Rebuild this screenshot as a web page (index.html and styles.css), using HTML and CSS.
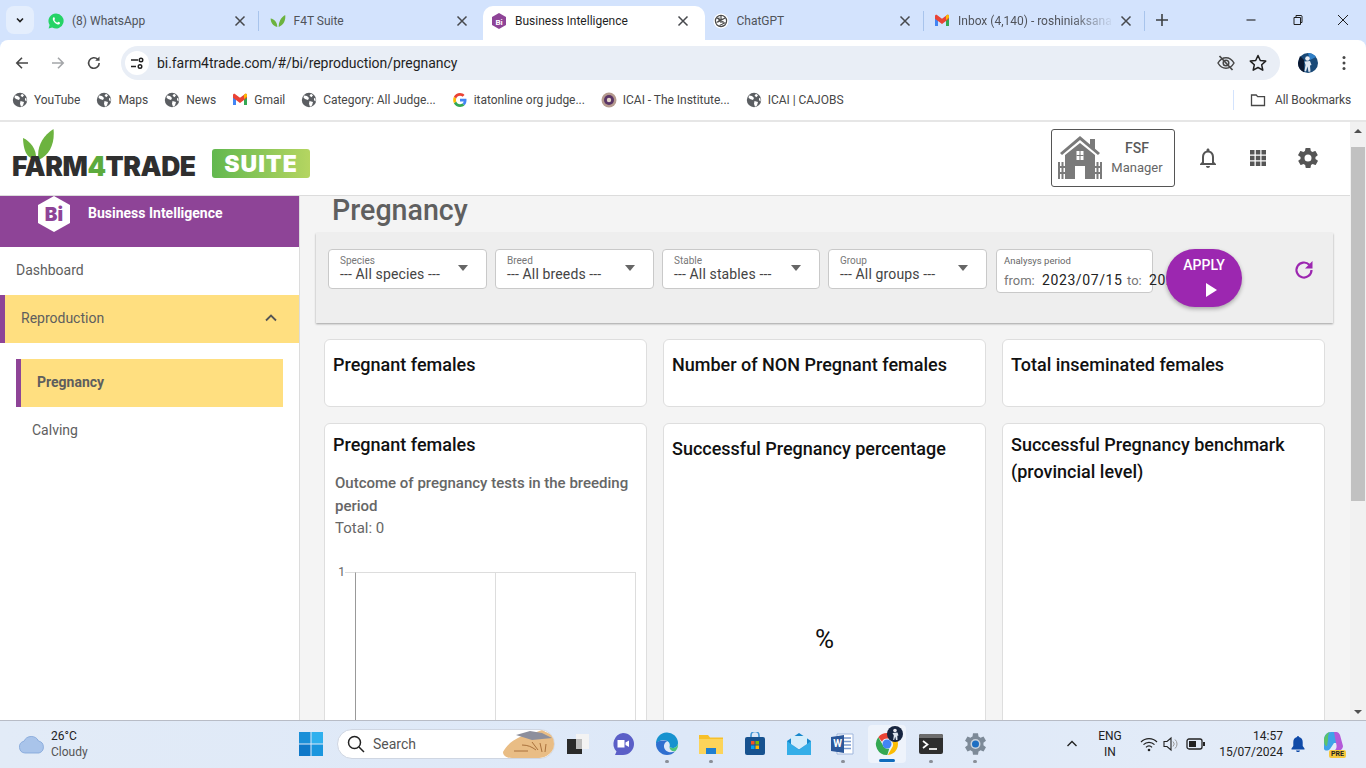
FILE: index.html
```html
<!DOCTYPE html>
<html lang="en">
<head>
<meta charset="utf-8">
<title>Business Intelligence</title>
<link rel="stylesheet" href="styles.css">
</head>
<body>
<svg class="defs" aria-hidden="true">
  <symbol id="x" viewBox="0 0 16 16"><path d="M3.5 3.5l9 9M12.5 3.5l-9 9" fill="none" stroke="#47494d" stroke-width="1.5"/></symbol>
  <symbol id="globe" viewBox="0 0 16 16"><circle cx="8" cy="8" r="7.2" fill="#5b5e62"/><path d="M3 3.5l3 .5 2 2-1 2-3-1-1.5-1.5zM10 1.8l2 1.5-1.5 2-2-1.5zM8.5 9l3.5 1-1 3.5-2 1.2-1-3zM13 6l1.5.5.2 3-1.7-1.2z" fill="#fff"/></symbol>
  <symbol id="gmail" viewBox="0 0 16 16"><path d="M1 4v9h3V7z" fill="#4285f4"/><path d="M12 7v6h3V4z" fill="#34a853"/><path d="M1 3.2v2.6L8 11l7-5.2V3.2c0-1.2-1.4-1.8-2.3-1L8 5.7 3.3 2.2C2.4 1.4 1 2 1 3.2z" fill="#ea4335"/><path d="M12 7l3-2.4V3.2c0-1.2-1.4-1.8-2.3-1L12 2.8z" fill="#fbbc04"/></symbol>
</svg>

<div class="chrome">
  <div class="tabstrip">
    <div class="collapse"><svg viewBox="0 0 10 10" class="i10"><path d="M2 3.5l3 3 3-3" fill="none" stroke="#1f1f1f" stroke-width="1.6"/></svg></div>
    <div class="tab sep">
      <svg class="fav" viewBox="0 0 16 16"><path d="M8 .5a7.5 7.5 0 0 0-6.4 11.4L.6 15.4l3.6-1A7.5 7.5 0 1 0 8 .5z" fill="#25d366"/><path d="M5.5 4.3c-.9.8-1 2.2 0 3.8 1 1.7 2.500 2.900 4.300 3.400 1 .2 1.900-.4 2.200-1.200l-.1-.8-1.700-.8-.9 1c-1.200-.4-2.400-1.500-3-2.700l.7-.9-.7-1.800z" fill="#fff"/></svg>
      <span class="tab-title">(8) WhatsApp</span><svg class="close"><use href="#x"/></svg><i class="bar"></i>
    </div>
    <div class="tab">
      <svg class="fav" viewBox="0 0 16 16"><path d="M7.300 14C3 13 .8 9.500.6 5.500 4.500 6 7.300 9.500 7.300 14zM8.700 14c0-5 2-9.500 6.500-12 .7 5-1.500 10-6.500 12z" fill="#6cb33f"/></svg>
      <span class="tab-title">F4T Suite</span><svg class="close"><use href="#x"/></svg><i class="bar off"></i>
    </div>
    <div class="tab active">
      <svg class="fav" viewBox="0 0 16 16"><path d="M8 0l7 4v8l-7 4-7-4V4z" fill="#8e4497"/><text x="8" y="11.500" text-anchor="middle" class="fav-bi">Bi</text></svg>
      <span class="tab-title">Business Intelligence</span><svg class="close"><use href="#x"/></svg><i class="bar off"></i>
    </div>
    <div class="tab sep">
      <svg class="fav" viewBox="0 0 16 16"><circle cx="8" cy="8" r="7.500" fill="#fff"/><g fill="none" stroke="#4a4a4a" stroke-width="1.200"><circle cx="8" cy="8" r="5.600"/><path d="M4 5l6 3.500v4M12 5l-6 3.500v-4M8 3l0 7M3.500 9.500l6-3.500M12.500 9.500l-6 3"/></g></svg>
      <span class="tab-title">ChatGPT</span><svg class="close"><use href="#x"/></svg><i class="bar"></i>
    </div>
    <div class="tab sep">
      <svg class="fav"><use href="#gmail"/></svg>
      <span class="tab-title fade">Inbox (4,140) - roshiniaksana</span><svg class="close"><use href="#x"/></svg><i class="bar"></i>
    </div>
    <div class="newtab"><svg viewBox="0 0 14 14" class="i14"><path d="M7 1v12M1 7h12" fill="none" stroke="#3c4043" stroke-width="1.600"/></svg></div>
    <div class="winctl">
      <div class="wbtn"><svg viewBox="0 0 12 12" class="i12"><path d="M1.500 6h9" stroke="#1f1f1f" stroke-width="1.100"/></svg></div>
      <div class="wbtn"><svg viewBox="0 0 12 12" class="i12"><path d="M3 3.500h6.500v7H3zM5 3.500V1.500h5.500l.5.500v6.500h-1.500" fill="none" stroke="#1f1f1f" stroke-width="1"/></svg></div>
      <div class="wbtn"><svg viewBox="0 0 12 12" class="i12"><path d="M1 1l10 10M11 1L1 11" stroke="#1f1f1f" stroke-width="1"/></svg></div>
    </div>
  </div>

  <div class="toolbar">
    <div class="navbtn"><svg viewBox="0 0 16 16" class="i16"><path d="M14 8H3M8 2.800L2.800 8 8 13.200" fill="none" stroke="#474747" stroke-width="1.600"/></svg></div>
    <div class="navbtn"><svg viewBox="0 0 16 16" class="i16"><path d="M2 8h11M8 2.800L13.200 8 8 13.200" fill="none" stroke="#a4a6a9" stroke-width="1.600"/></svg></div>
    <div class="navbtn"><svg viewBox="0 0 16 16" class="i16"><path d="M13.200 8a5.300 5.300 0 1 1-1.500-3.700" fill="none" stroke="#474747" stroke-width="1.600"/><path d="M13.500 1.500v4.300H9.200z" fill="#474747"/></svg></div>
    <div class="omnibox">
      <div class="site"><svg viewBox="0 0 16 16" class="i16"><g fill="none" stroke="#1f1f1f" stroke-width="1.400"><path d="M2 5h7M2 11.500h5"/><circle cx="12" cy="5" r="1.800"/><circle cx="11" cy="11.500" r="1.800"/></g></svg></div>
      <span class="url">bi.farm4trade.com/#/bi/reproduction/pregnancy</span>
      <div class="omni-icons">
        <svg viewBox="0 0 20 20" class="i20"><path d="M2 10c2-3.500 4.800-5.300 8-5.300S16 6.500 18 10c-2 3.500-4.800 5.300-8 5.300S4 13.500 2 10z" fill="none" stroke="#474747" stroke-width="1.500"/><circle cx="10" cy="10" r="2.800" fill="none" stroke="#474747" stroke-width="1.500"/><path d="M3.500 3l13 14" stroke="#474747" stroke-width="1.700"/></svg>
        <svg viewBox="0 0 20 20" class="i20"><path d="M10 2.500l2.300 5 5.400.6-4 3.700 1.100 5.400L10 14.500l-4.800 2.700 1.100-5.400-4-3.700 5.400-.6z" fill="none" stroke="#1f1f1f" stroke-width="1.500" stroke-linejoin="round"/></svg>
      </div>
    </div>
    <div class="avatar-btn"><svg viewBox="0 0 20 20" class="i20"><circle cx="10" cy="10" r="10" fill="#1a4a78"/><path d="M0 10a10 10 0 0 0 6 9.200V7L2 3z" fill="#0a1730"/><path d="M10 0a10 10 0 0 1 8 4l-6 3z" fill="#2f7fc7"/><circle cx="9.500" cy="5.500" r="2.300" fill="#eceef4"/><path d="M6.500 8.500L12 8l1.500 4-1.500.5.500 6-2 .5-1-5.500-1.500 5-1.500-.5 1-6z" fill="#dfe6f0"/></svg></div>
    <div class="menu-btn"><svg viewBox="0 0 4 16" class="dots"><circle cx="2" cy="2.500" r="1.500" fill="#474747"/><circle cx="2" cy="8" r="1.500" fill="#474747"/><circle cx="2" cy="13.500" r="1.500" fill="#474747"/></svg></div>
  </div>

  <div class="bookmarks">
    <span class="bm"><svg class="i16"><use href="#globe"/></svg>YouTube</span>
    <span class="bm"><svg class="i16"><use href="#globe"/></svg>Maps</span>
    <span class="bm"><svg class="i16"><use href="#globe"/></svg>News</span>
    <span class="bm"><svg class="i16"><use href="#gmail"/></svg>Gmail</span>
    <span class="bm"><svg class="i16"><use href="#globe"/></svg>Category: All Judge...</span>
    <span class="bm"><svg viewBox="0 0 16 16" class="i16"><path d="M14.500 8.200c0-.5 0-1-.1-1.400H8v2.700h3.700c-.2.900-.7 1.600-1.400 2.100l2.200 1.700c1.300-1.200 2-3 2-5.100z" fill="#4285f4"/><path d="M8 15c1.800 0 3.400-.6 4.500-1.700l-2.200-1.700c-.6.400-1.400.7-2.300.7-1.800 0-3.300-1.200-3.800-2.800L1.900 11.200C3 13.500 5.300 15 8 15z" fill="#34a853"/><path d="M4.200 9.500c-.3-.9-.3-1.900 0-2.900L1.900 4.800c-1 1.900-1 4.400 0 6.400z" fill="#fbbc04"/><path d="M8 3.800c1 0 1.900.3 2.600 1l1.900-1.900C11.400 1.700 9.800 1 8 1 5.300 1 3 2.500 1.900 4.800l2.300 1.800C4.700 5 6.200 3.800 8 3.800z" fill="#ea4335"/></svg>itatonline org judge...</span>
    <span class="bm"><svg viewBox="0 0 16 16" class="i16"><circle cx="8" cy="8" r="7.500" fill="#b59a8e"/><circle cx="8" cy="8" r="5" fill="#5a3566"/><circle cx="8" cy="8" r="2.200" fill="#e4d6c8"/></svg>ICAI - The Institute...</span>
    <span class="bm"><svg class="i16"><use href="#globe"/></svg>ICAI | CAJOBS</span>
    <i class="bm-sep"></i>
    <span class="bm-all"><svg viewBox="0 0 16 16" class="i16"><path d="M1.500 3h4.700l1.500 1.700h6.800v8.800h-13z" fill="none" stroke="#474747" stroke-width="1.300"/></svg>All Bookmarks</span>
  </div>
</div>

<div class="app">
  <div class="app-main">
    <header class="app-header">
      <div class="logo">
        <div class="logo-mark">
          <svg viewBox="0 0 31 32" class="leaves"><path d="M13 31C5.500 29.500.5 24.500 0 9c7 3 14 11 13 22z" fill="#6cb33f"/><path d="M15.500 31C13.500 19 19 7 30.500 0c1.500 13-3 26-15 31z" fill="#6cb33f"/></svg>
          <div class="wordmark">FARM<span class="four">4</span>TRADE</div>
        </div>
        <div class="suite">SUITE</div>
      </div>
      <div class="userbox">
        <svg viewBox="0 0 44 43" class="house"><g fill="#7a7a7a"><path d="M32 3h5v11l-5-4z"/><path d="M22 0L2 17l2 2L22 4l18 15 2-2z"/><path d="M7 19L22 7l15 12v24H27V30h-10v13H7z"/><path d="M0 26h2v17H0zM3.500 26h2v17h-2zM38.500 26h2v17h-2zM42 26h2v17h-2z"/><path d="M0 30h7v2H0zM0 36h7v2H0zM37 30h7v2h-7zM37 36h7v2h-7z"/></g><path d="M18.500 15h7v9h-7z" fill="#fff"/><path d="M21.500 15h1v9h-1zM18.500 19h7v1h-7z" fill="#7a7a7a"/></svg>
        <div class="user-text"><div class="farm">FSF</div><div class="role">Manager</div></div>
      </div>
      <div class="head-icons">
        <svg viewBox="0 0 24 24" class="i24"><path d="M12 22c1.100 0 2-.9 2-2h-4c0 1.100.9 2 2 2zm6-6v-5c0-3.100-1.600-5.600-4.500-6.300V4c0-.8-.7-1.500-1.500-1.500s-1.500.7-1.500 1.500v.7C7.600 5.400 6 7.900 6 11v5l-2 2v1h16v-1zm-2 1H8v-6c0-2.500 1.500-4.500 4-4.500s4 2 4 4.500z" fill="#555"/></svg>
        <svg viewBox="0 0 24 24" class="i24"><path d="M4 4h4.500v4.500H4zM9.800 4h4.500v4.500H9.800zM15.500 4H20v4.500h-4.500zM4 9.800h4.500v4.500H4zM9.800 9.800h4.500v4.500H9.800zM15.500 9.800H20v4.500h-4.500zM4 15.500h4.500V20H4zM9.800 15.500h4.500V20H9.800zM15.500 15.500H20V20h-4.500z" fill="#555"/></svg>
        <svg viewBox="0 0 24 24" class="i24"><path d="M19.400 13c0-.3.100-.6.100-1s0-.7-.1-1l2.100-1.600c.2-.1.200-.4.100-.6l-2-3.500c-.1-.2-.4-.3-.6-.2l-2.500 1c-.5-.4-1.100-.7-1.700-1l-.4-2.600c0-.3-.2-.4-.5-.4h-4c-.3 0-.5.2-.5.400l-.4 2.600c-.6.300-1.200.6-1.700 1l-2.500-1c-.2-.1-.5 0-.6.200l-2 3.500c-.1.200-.1.500.1.600L4.600 11c0 .3-.1.700-.1 1s0 .7.1 1l-2.100 1.600c-.2.100-.2.400-.1.600l2 3.500c.1.200.4.300.6.200l2.500-1c.5.400 1.100.7 1.700 1l.4 2.600c0 .3.200.4.500.4h4c.3 0 .5-.2.500-.4l.4-2.600c.6-.3 1.200-.6 1.700-1l2.500 1c.2.100.5 0 .6-.2l2-3.500c.1-.2.100-.5-.1-.6zM12 15.500a3.500 3.500 0 1 1 0-7 3.500 3.500 0 0 1 0 7z" fill="#555"/></svg>
      </div>
    </header>

    <div class="app-body">
      <aside class="sidebar">
        <div class="side-head">
          <svg viewBox="0 0 32 36" class="hex"><path d="M16 0l16 9v18l-16 9-16-9V9z" fill="#fff"/><text x="16" y="25" text-anchor="middle" class="hex-bi">Bi</text></svg>
          <span>Business Intelligence</span>
        </div>
        <div class="side-item">Dashboard</div>
        <div class="side-group">Reproduction<svg viewBox="0 0 14 14" class="i14"><path d="M2 9.500L7 4.500l5 5" fill="none" stroke="#555" stroke-width="1.800"/></svg></div>
        <div class="side-current">Pregnancy</div>
        <div class="side-sub">Calving</div>
      </aside>

      <main class="content">
        <h1 class="page-title">Pregnancy</h1>
        <section class="filters">
          <div class="select"><div class="sel-text"><div class="sel-label">Species</div><div class="sel-value">--- All species ---</div></div><i class="caret"></i></div>
          <div class="select"><div class="sel-text"><div class="sel-label">Breed</div><div class="sel-value">--- All breeds ---</div></div><i class="caret"></i></div>
          <div class="select"><div class="sel-text"><div class="sel-label">Stable</div><div class="sel-value">--- All stables ---</div></div><i class="caret"></i></div>
          <div class="select"><div class="sel-text"><div class="sel-label">Group</div><div class="sel-value">--- All groups ---</div></div><i class="caret"></i></div>
          <div class="datebox">
            <div class="date-label">Analysys period</div>
            <div class="date-row"><span class="d-from">from:</span><span class="d-val">2023/07/15</span><span class="d-to">to:</span><span class="d-val">2024/07/15</span></div>
          </div>
          <button class="apply">APPLY<svg viewBox="0 0 12 14" class="play"><path d="M1 0l11 7-11 7z" fill="#fff"/></svg></button>
          <svg viewBox="0 0 24 24" class="refresh"><path d="M19.500 12a7.500 7.500 0 1 1-2.200-5.300" fill="none" stroke="#9c27b0" stroke-width="2.200"/><path d="M20.500 3v7.500H13z" fill="#9c27b0"/></svg>
        </section>

        <section class="cards">
          <article class="card card-short"><h2 class="card-title">Pregnant females</h2></article>
          <article class="card card-short"><h2 class="card-title">Number of NON Pregnant females</h2></article>
          <article class="card card-short"><h2 class="card-title">Total inseminated females</h2></article>

          <article class="card card-tall tight">
            <h2 class="card-title">Pregnant females</h2>
            <p class="chart-sub">Outcome of pregnancy tests in the breeding period</p>
            <p class="chart-total">Total: 0</p>
            <div class="chart">
              <span class="tick-label">1</span><i class="tick"></i>
              <div class="plot"><i class="cell"></i><i class="cell"></i></div>
            </div>
          </article>
          <article class="card card-tall pct-card">
            <h2 class="card-title">Successful Pregnancy percentage</h2>
            <div class="pct">%</div>
          </article>
          <article class="card card-tall tight">
            <h2 class="card-title">Successful Pregnancy benchmark (provincial level)</h2>
          </article>
        </section>
      </main>
    </div>
  </div>
  <div class="scrollbar">
    <div class="sb-btn"><i class="sb-up"></i></div>
    <div class="sb-track"><div class="sb-thumb"></div></div>
    <div class="sb-btn"><i class="sb-down"></i></div>
  </div>
</div>

<footer class="taskbar">
  <div class="weather">
    <svg viewBox="0 0 28 20" class="cloud"><path d="M7 19a6 6 0 0 1-1-11.800A8 8 0 0 1 20.500 7 6.200 6.200 0 0 1 21 19z" fill="#a9c4ea" stroke="#7fa3d8" stroke-width=".8"/></svg>
    <div class="w-text"><div class="w-temp">26°C</div><div class="w-desc">Cloudy</div></div>
  </div>
  <svg viewBox="0 0 24 24" class="winlogo"><path d="M0 0h11.500v11.500H0z" fill="#1a8fd8"/><path d="M12.500 0H24v11.500H12.500z" fill="#2fb0ee"/><path d="M0 12.500h11.500V24H0z" fill="#0f78c8"/><path d="M12.500 12.500H24V24H12.500z" fill="#1a96de"/></svg>
  <div class="search">
    <svg viewBox="0 0 18 18" class="i18"><circle cx="7.500" cy="7.500" r="6" fill="none" stroke="#222" stroke-width="1.500"/><path d="M12 12l5 5" stroke="#222" stroke-width="1.500"/></svg>
    <span>Search</span>
    <svg viewBox="0 0 52 28" class="hand"><path d="M1 22C6 12 18 5 32 3l8-3 12 6v12c-3 6-9 10-15 10H10C5 28 1 26 1 22z" fill="#e9bd85"/><path d="M14 5l14-4 12 2 10 5-20 2z" fill="#8d8f9c"/><path d="M20 15c6 0 10 2 14 5M30 12l6 8M38 13l2 9M44 14l-1 8M12 21h14" fill="none" stroke="#a9713c" stroke-width="1"/></svg>
  </div>
  <div class="tb-icon"><svg viewBox="-3 0 24 24" class="i24"><path d="M8 2h13v15H8z" fill="#f3f3f3"/><path d="M-1 7h15v15H-1z" fill="#2a2a2a"/><path d="M8 7h6v10H8z" fill="#bdbdbd"/></svg></div>
  <div class="tb-icon tb-gap"><svg viewBox="0 0 24 24" class="i24"><path d="M12 1a11 11 0 0 1 0 22H4l1.500-3.500A11 11 0 0 1 12 1z" fill="#5b5fc7"/><path d="M6.500 8h7v7.500h-7zM14.500 10.500l3.500-2v6.500l-3.500-2z" fill="#fff"/></svg><i class="run none"></i></div>
  <div class="tb-icon"><svg viewBox="0 0 24 24" class="i24"><path d="M1 12A11 11 0 0 1 23 11c0 3-2.500 5-5.500 5-2 0-3-1-3-1 .5-1 .5-3-.5-4.500C12 7.500 7 7 3.500 9.500 2.500 10.300 1.500 11 1 12z" fill="#1792cf"/><path d="M1 12c0 6 5 11 11 11 3 0 6-1 8-3.500-5 2-10 0-11-4.500-.5-2.500 1-5 3.500-6C8 8 2 8.500 1 12z" fill="#2f6fd0"/><path d="M23 11c0 3-2.500 5-5.500 5-2 0-3-1-3-1 0 3 3 5 6 4 2-2 3-5 2.500-8z" fill="#4dc47a"/></svg><i class="run"></i></div>
  <div class="tb-icon"><svg viewBox="0 0 24 24" class="i24"><path d="M0 3h9l2 2.500h13V12H0z" fill="#f7c02a"/><path d="M0 7h24v15H0z" fill="#fcd45a"/><path d="M7 16h10v6H7z" fill="#1f7fd0"/></svg><i class="run"></i></div>
  <div class="tb-icon"><svg viewBox="0 0 24 24" class="i24"><path d="M8 6V3.500a4 4 0 0 1 8 0V6" fill="none" stroke="#3f94d4" stroke-width="1.600"/><rect x="2" y="5" width="20" height="18" rx="2" fill="#17528f"/><path d="M8 9h3.500v3.500H8z" fill="#f25022"/><path d="M12.500 9H16v3.500h-3.500z" fill="#7fba00"/><path d="M8 13.500h3.500V17H8z" fill="#00a4ef"/><path d="M12.500 13.500H16V17h-3.500z" fill="#ffb900"/></svg></div>
  <div class="tb-icon"><svg viewBox="0 0 24 24" class="i24"><path d="M0 9l12-8 12 8v14H0z" fill="#1587cc"/><path d="M0 9l12 9 12-9v14H0z" fill="#34aee8"/><path d="M4 4h16v8l-8 5.500L4 12z" fill="#d5edfb"/></svg></div>
  <div class="tb-icon"><svg viewBox="0 0 24 24" class="i24"><path d="M6 2h16v20H6z" fill="#fff" stroke="#9fb6dc"/><path d="M13 6h7M13 9.500h7M13 13h7M13 16.500h7" stroke="#7b9ad0" stroke-width="1.400"/><path d="M0 5l13-2v18L0 19z" fill="#2b579a"/><text x="6.500" y="15" text-anchor="middle" class="word-w">W</text></svg><i class="run"></i></div>
  <div class="tb-icon tb-active">
    <svg viewBox="0 0 24 24" class="i24"><path d="M12 1a11 11 0 0 1 9.500 5.500H12a5.500 5.500 0 0 0-5 3.200L3.300 5.200A11 11 0 0 1 12 1z" fill="#ea4335"/><path d="M21.500 6.500A11 11 0 0 1 12.800 23l4-7a5.500 5.500 0 0 0 .5-6z" fill="#fbbc04"/><path d="M3.300 5.200l4.500 7.800a5.500 5.500 0 0 0 6.500 3.500l-2 6.500A11 11 0 0 1 3.300 5.200z" fill="#34a853"/><circle cx="12" cy="12" r="4.500" fill="#4285f4"/></svg>
    <svg viewBox="0 0 16 16" class="badge"><circle cx="8" cy="8" r="8" fill="#16243f"/><circle cx="8" cy="4.500" r="1.800" fill="#e8e8ee"/><path d="M5.500 7l5-.5 1 3-1.200.3.200 4.200h-1.500l-.8-3.500-1 3.500H6.200l.6-4.500z" fill="#dfe6f0"/></svg>
    <i class="run long"></i>
  </div>
  <div class="tb-icon"><svg viewBox="0 0 24 24" class="i24"><rect y="2" width="24" height="20" rx="2" fill="#2e2e2e"/><path d="M0 6V4a2 2 0 0 1 2-2h20a2 2 0 0 1 2 2v2z" fill="#6d6d6d"/><path d="M4 9l4.500 3.500L4 16" fill="none" stroke="#fff" stroke-width="1.700"/><path d="M10 17h8" stroke="#fff" stroke-width="1.700"/></svg><i class="run"></i></div>
  <div class="tb-icon"><svg viewBox="0 0 24 24" class="i24"><path d="M20.400 13.200l.1-1.200-.1-1.200 2.600-2-2.500-4.300-3 1.200a9 9 0 0 0-2-1.200L15 1.300h-5l-.5 3.200a9 9 0 0 0-2 1.200l-3-1.200L2 8.800l2.600 2L4.500 12l.1 1.200-2.600 2 2.500 4.300 3-1.200a9 9 0 0 0 2 1.200l.5 3.200h5l.5-3.200a9 9 0 0 0 2-1.200l3 1.200 2.500-4.300z" fill="#7d8a98"/><circle cx="12.500" cy="12" r="5" fill="#c9d2dc"/><circle cx="12.500" cy="12" r="3.500" fill="#1f6fc2"/></svg><i class="run"></i></div>

  <div class="tray">
    <svg viewBox="0 0 12 12" class="i12 chev"><path d="M1.500 8L6 3.500 10.500 8" fill="none" stroke="#222" stroke-width="1.400"/></svg>
    <div class="lang"><div>ENG</div><div>IN</div></div>
    <svg viewBox="0 0 18 16" class="tray-ico"><path d="M1 6a11 11 0 0 1 16 0M3.500 8.700a7.500 7.500 0 0 1 11 0M6 11.300a4 4 0 0 1 6 0" fill="none" stroke="#222" stroke-width="1.200"/><circle cx="9" cy="14" r="1.300" fill="#222"/></svg>
    <svg viewBox="0 0 18 16" class="tray-ico"><path d="M2 5.500h3l4-3.500v12l-4-3.500H2z" fill="none" stroke="#222" stroke-width="1.100"/><path d="M11 5.500a3.500 3.500 0 0 1 0 5M13 3.500a6 6 0 0 1 0 9" fill="none" stroke="#999" stroke-width="1"/></svg>
    <svg viewBox="0 0 20 14" class="batt"><rect x="1" y="2" width="15" height="10" rx="2" fill="none" stroke="#222" stroke-width="1.300"/><rect x="3" y="4" width="7" height="6" fill="#222"/><path d="M17 5h2v4h-2z" fill="#222"/></svg>
    <div class="clock"><div>14:57</div><div>15/07/2024</div></div>
    <svg viewBox="0 0 16 16" class="i16 tray-bell"><path d="M8 16c1 0 1.800-.7 2-1.600H6c.2.900 1 1.600 2 1.600zM8 0a1 1 0 0 0-1 1C4.500 1.600 3.300 3.700 3.300 6v4L1.500 12.500v1h13v-1L12.700 10V6c0-2.300-1.200-4.400-3.700-5a1 1 0 0 0-1-1z" fill="#0f4aa8"/></svg>
    <div class="copilot">
      <svg viewBox="0 0 24 24" class="i24"><path d="M3 10c0-5 3-8 7-8h4c2 0 3 1 4 3l3 10c-1-1-3-2-5-2h-3L9 19c-2 2-5 2-6 0z" fill="#3fa3e8"/><path d="M13 2h2c2 0 3 1 4 3l3 11c0 3-3 5-6 5h-3c3-2 3-5 2-8z" fill="#b45ad9"/><path d="M3 10c0-3 2-7 6-8-2 2-2 5-2 8l-1 6c-2 0-3-2-3-6z" fill="#5dc36a"/></svg>
      <span class="pre">PRE</span>
    </div>
  </div>
</footer>
</body>
</html>
```

FILE: styles.css
```css
* { box-sizing: border-box; }
html, body { margin: 0; padding: 0; }
body {
  width: 1366px;
  height: 768px;
  overflow: hidden;
  display: flex;
  flex-direction: column;
  font-family: Roboto, "Liberation Sans", sans-serif;
  background: #fff;
}
svg { display: block; flex: none; }
.defs { width: 0; height: 0; overflow: hidden; }
.i10 { width: 10px; height: 10px; }
.i12 { width: 12px; height: 12px; }
.i14 { width: 14px; height: 14px; }
.i16 { width: 16px; height: 16px; }
.i18 { width: 18px; height: 18px; }
.i20 { width: 20px; height: 20px; }
.i24 { width: 24px; height: 24px; }

/* browser chrome */
.chrome { background: #d3e3fd; flex: none; }
.tabstrip { height: 40px; display: flex; align-items: flex-start; padding-left: 6px; color: #3c4043; }
.collapse {
  width: 28px; height: 28px; margin: 6px 6px 0 0; border-radius: 8px;
  background: #e4eefd; display: flex; align-items: center; justify-content: center;
}
.tab {
  width: 221.5px; height: 34px; margin-top: 6px; padding: 0 0 5px 8px;
  display: flex; align-items: center; font-size: 12px; position: relative;
}
.fav { width: 16px; height: 16px; margin-right: 8px; }
.fav-bi { font: 700 8px Roboto, sans-serif; fill: #fff; }
.tab-title { flex: 1; white-space: nowrap; overflow: hidden; min-width: 0; color: #50535a; }
.fade { -webkit-mask-image: linear-gradient(90deg, #000 70%, transparent 98%); mask-image: linear-gradient(90deg, #000 70%, transparent 98%); }
.close { width: 16px; height: 16px; }
.bar { width: 1px; height: 20px; background: #a8c4ec; margin-left: 10px; margin-right: 2.5px; flex: none; }
.bar.off { background: transparent; }
.tab.active { background: #fff; border-radius: 10px 10px 0 0; width: 221.5px; }
.tab.active .tab-title { color: #1f1f1f; }
.newtab { width: 20px; height: 20px; margin: 10px 0 0 4px; display: flex; align-items: center; justify-content: center; }
.winctl { margin-left: auto; display: flex; }
.wbtn { width: 46px; height: 40px; display: flex; align-items: center; justify-content: center; }

.toolbar {
  height: 40px; background: #fff; border-radius: 8px 8px 0 0;
  display: flex; align-items: flex-end; padding-left: 4px;
}
.navbtn { width: 36px; height: 34px; display: flex; align-items: center; justify-content: center; }
.omnibox {
  width: 1159px; height: 34px; margin-left: 9px; background: #e9eef6; border-radius: 17px;
  display: flex; align-items: center; padding: 0 12px 0 4px;
}
.site { width: 24px; height: 24px; border-radius: 50%; background: #fff; display: flex; align-items: center; justify-content: center; margin-right: 8px; }
.url { font-size: 14px; color: #1f1f1f; letter-spacing: -.05px; }
.omni-icons { margin-left: auto; display: flex; gap: 12px; }
.avatar-btn { width: 36px; height: 34px; margin-left: 10px; display: flex; align-items: center; justify-content: center; }
.menu-btn { width: 36px; height: 34px; display: flex; align-items: center; justify-content: center; }
.dots { width: 4px; height: 16px; }

.bookmarks {
  height: 40px; background: #fff; display: flex; align-items: center; padding: 0 15px 0 12px; gap: 16px;
  font-size: 12px; color: #474747; letter-spacing: -.03px;
}
.bm, .bm-all { display: flex; align-items: center; gap: 6px; white-space: nowrap; }
.bm-sep { width: 1px; height: 20px; background: #d3e3fd; margin-left: auto; }
.bm-all { gap: 9px; margin-left: 0; letter-spacing: -.1px; }

/* app frame */
.app { flex: none; height: 600px; display: flex; border-top: 2px solid #e6e6e6; overflow: hidden; }
.app-main { width: 1350px; display: flex; flex-direction: column; height: 598px; }
.app-header {
  height: 74px; flex: none; background: #fff; border-bottom: 1px solid #dcdcdc;
  display: flex; align-items: center; padding: 0 30px 2px 12px;
}
.logo { display: flex; align-items: flex-end; align-self: flex-start; margin-top: 7px; }
.logo-mark { display: flex; flex-direction: column; width: 186px; height: 49px; }
.leaves { width: 31px; height: 32px; margin-left: 11px; margin-bottom: -7px; }
.wordmark { font: 900 26.5px/24px Inter, "Liberation Sans", sans-serif; color: #2f2f2f; letter-spacing: -.45px; white-space: nowrap; }
.four { color: #5cab3d; }
.suite {
  width: 98px; height: 29px; margin-left: 14px; padding-top: 1px; border-radius: 3px;
  background: linear-gradient(90deg, #62b84f, #b5d561);
  color: #fff; font: 900 23px/28px Inter, sans-serif; text-align: center; letter-spacing: 1px;
}
.userbox {
  margin-left: auto; width: 124px; height: 58px; border: 1px solid #555; border-radius: 3px;
  display: flex; align-items: center; padding-left: 6px; margin-right: 21px;
}
.house { width: 44px; height: 43px; }
.user-text { flex: 1; text-align: center; color: #666; padding-right: 2px; }
.farm { font-size: 14px; font-weight: 500; line-height: 20px; color: #5a5a5a; }
.role { font-size: 13px; line-height: 20px; letter-spacing: 0; }
.head-icons { display: flex; gap: 26px; }

.app-body { flex: 1; display: flex; min-height: 0; }
.sidebar { width: 300px; flex: none; background: #fff; border-right: 1px solid #dcdcdc; font-size: 14px; color: #5e5e5e; }
.side-head {
  height: 51px; background: #8e4497; display: flex; align-items: flex-start; color: #fff;
  padding-left: 38px; font-weight: 700;
}
.side-head span { margin: 9px 0 0 18px; line-height: 16px; }
.hex { width: 32px; height: 36px; }
.hex-bi { font: 900 19px Inter, sans-serif; fill: #8e4497; }
.side-item { height: 48px; padding: 0 0 2px 16px; display: flex; align-items: center; }
.side-group {
  height: 48px; background: #ffdf80; border-left: 5px solid #8e4497; padding: 0 21px 2px 16px;
  display: flex; align-items: center; justify-content: space-between;
}
.side-current {
  margin: 16px 16px 0; height: 48px; background: #ffdf80; border-left: 5px solid #8e4497;
  padding: 0 0 2px 16px; display: flex; align-items: center; font-weight: 700; width: 267px;
}
.side-sub { height: 46px; padding-left: 32px; display: flex; align-items: center; }

.content { flex: 1; background: #f4f4f4; min-width: 0; }
.page-title { margin: 0; height: 37px; padding-left: 32px; font-size: 28.6px; font-weight: 500; line-height: 28px; color: #5f5f5f; }
.filters {
  margin-left: 16px; width: 1017px; height: 90px; background: #eeeeee; padding: 16px 0 0 12px;
  box-shadow: 0 1px 2px rgba(0,0,0,.35);
  display: flex; align-items: flex-start; gap: 8px;
}
.select {
  width: 159px; height: 40px; background: #fff; border: 1px solid #c9c9c9; border-radius: 4px;
  padding: 5px 18px 0 11px; display: flex; justify-content: space-between;
}
.select:nth-child(3) { width: 158px; }
.sel-label { font-size: 10px; line-height: 11px; color: #777; }
.sel-value { font-size: 14px; line-height: 16px; color: #444; white-space: nowrap; letter-spacing: .13px; }
.caret { width: 0; height: 0; margin-top: 10px; border: 5.5px solid transparent; border-top: 6px solid #666; border-bottom: 0; }
.datebox {
  width: 157px; height: 44px; margin-left: 1px; background: #fff; border: 1px solid #c9c9c9; border-radius: 4px;
  padding: 5px 0 0 7px; white-space: nowrap;
}
.date-label { font-size: 9.5px; line-height: 12px; color: #666; }
.date-row { display: flex; align-items: center; height: 20px; margin-top: 3px; }
.d-from { width: 38px; font-size: 13px; color: #777; flex: none; }
.d-to { width: 22px; font-size: 13px; color: #777; flex: none; }
.d-val { width: 85px; font-size: 14px; color: #222; letter-spacing: .6px; flex: none; }
.apply {
  width: 76px; height: 58px; margin-left: 5px; border: 0; border-radius: 29px; background: #9c27b0; color: #fff;
  font: 500 14px/16px Roboto, sans-serif; padding: 8px 0 0; position: relative; z-index: 1;
  display: flex; flex-direction: column; align-items: center;
  box-shadow: 0 2px 4px rgba(0,0,0,.3);
}
.play { width: 12px; height: 14px; margin: 10px 0 0 13px; }
.refresh { width: 24px; height: 24px; margin: 9px 0 0 42px; }

.cards {
  display: grid; grid-template-columns: repeat(3, 323px); grid-template-rows: 68px 420px; gap: 16px;
  margin: 16px 0 0 24px; height: 381px; overflow: hidden;
}
.card { background: #fff; border: 1px solid #dedede; border-radius: 6px; padding: 11px 8px 0; }
.tight { padding-top: 7px; }
.card-title { margin: 0; font-size: 18px; font-weight: 500; line-height: 27px; color: #111; }
.chart-sub { margin: 14px 0 0 2px; font-size: 15px; font-weight: 500; line-height: 23px; color: #666; }
.chart-total { margin: 0 0 0 2px; font-size: 15px; line-height: 21px; color: #666; }
.chart { margin-top: 33px; display: flex; align-items: flex-start; height: 200px; }
.tick-label { width: 12px; margin-top: -8px; font-size: 12px; line-height: 16px; text-align: right; color: #666; }
.tick { width: 10px; height: 1px; background: #ddd; flex: none; }
.plot { width: 281px; height: 200px; border-left: 1px solid #999; border-top: 1px solid #ddd; display: flex; }
.cell { width: 140px; border-right: 1px solid #ddd; }
.pct { margin-top: 163px; text-align: center; font-size: 26px; line-height: 28px; color: #111; }

/* scrollbar */
.scrollbar { width: 16px; height: 598px; background: #f1f1f1; display: flex; flex-direction: column; flex: none; }
.sb-btn { height: 17px; display: flex; align-items: center; justify-content: center; flex: none; }
.sb-up, .sb-down { width: 0; height: 0; border: 4px solid transparent; }
.sb-up { border-bottom: 4px solid #505050; border-top: 0; }
.sb-down { border-top: 4px solid #505050; border-bottom: 0; }
.sb-track { flex: 1; padding: 8px 1px 0; }
.sb-thumb { height: 354px; background: #c1c1c1; }

/* taskbar */
.taskbar {
  height: 48px; flex: none; display: flex; align-items: center; padding-bottom: 1px;
  background: linear-gradient(90deg, #e2ebf7, #dde8f8 50%, #e4ecf8);
  border-top: 1px solid #b8bcc6;
  font-size: 12px; color: #222;
}
.weather { width: 299px; flex: none; display: flex; align-items: center; padding-left: 18px; gap: 5px; }
.cloud { width: 28px; height: 20px; }
.w-temp { line-height: 16px; }
.w-desc { line-height: 16px; color: #555; }
.winlogo { width: 24px; height: 24px; flex: none; }
.search {
  width: 218px; height: 30px; margin-left: 14px; border-radius: 15px; background: #fff;
  border: 1px solid #cfd6e2; display: flex; align-items: center; padding-left: 9px; overflow: hidden;
  font-size: 14px; color: #555; flex: none;
}
.search span { margin-left: 8px; }
.hand { width: 52px; height: 28px; margin-left: auto; }
.tb-icon { width: 44px; height: 46px; display: flex; align-items: center; justify-content: center; position: relative; flex: none; }
.tb-gap { margin-left: 2px; }
.run { position: absolute; bottom: 4px; left: 20px; width: 4px; height: 3px; border-radius: 2px; background: #8a8f98; }
.run.none { display: none; }
.tb-active { width: 38px; height: 38px; margin: 0 3px; background: #eef3fb; border-radius: 4px; }
.run.long { left: 11px; bottom: 1px; width: 16px; background: #0f6cbd; }
.badge { position: absolute; top: 1px; right: 3px; width: 16px; height: 16px; }
.word-w { font: 700 10px Roboto, sans-serif; fill: #fff; }
.tray { display: flex; align-items: center; margin-left: 69px; flex: none; }
.chev { margin-right: 10px; }
.lang { width: 44px; text-align: center; line-height: 16px; margin-right: 8px; }
.tray-ico { width: 18px; height: 16px; margin-right: 4px; }
.batt { width: 20px; height: 14px; margin-left: 2px; }
.clock { width: 77px; text-align: right; line-height: 16px; }
.tray-bell { margin-left: 7px; }
.copilot { position: relative; width: 24px; height: 28px; margin-left: 15px; }
.pre { position: absolute; right: -1px; bottom: 0; background: #f7c93e; font: 700 7px/8px Roboto, sans-serif; padding: 0 2px; border-radius: 2px; color: #222; }
```
